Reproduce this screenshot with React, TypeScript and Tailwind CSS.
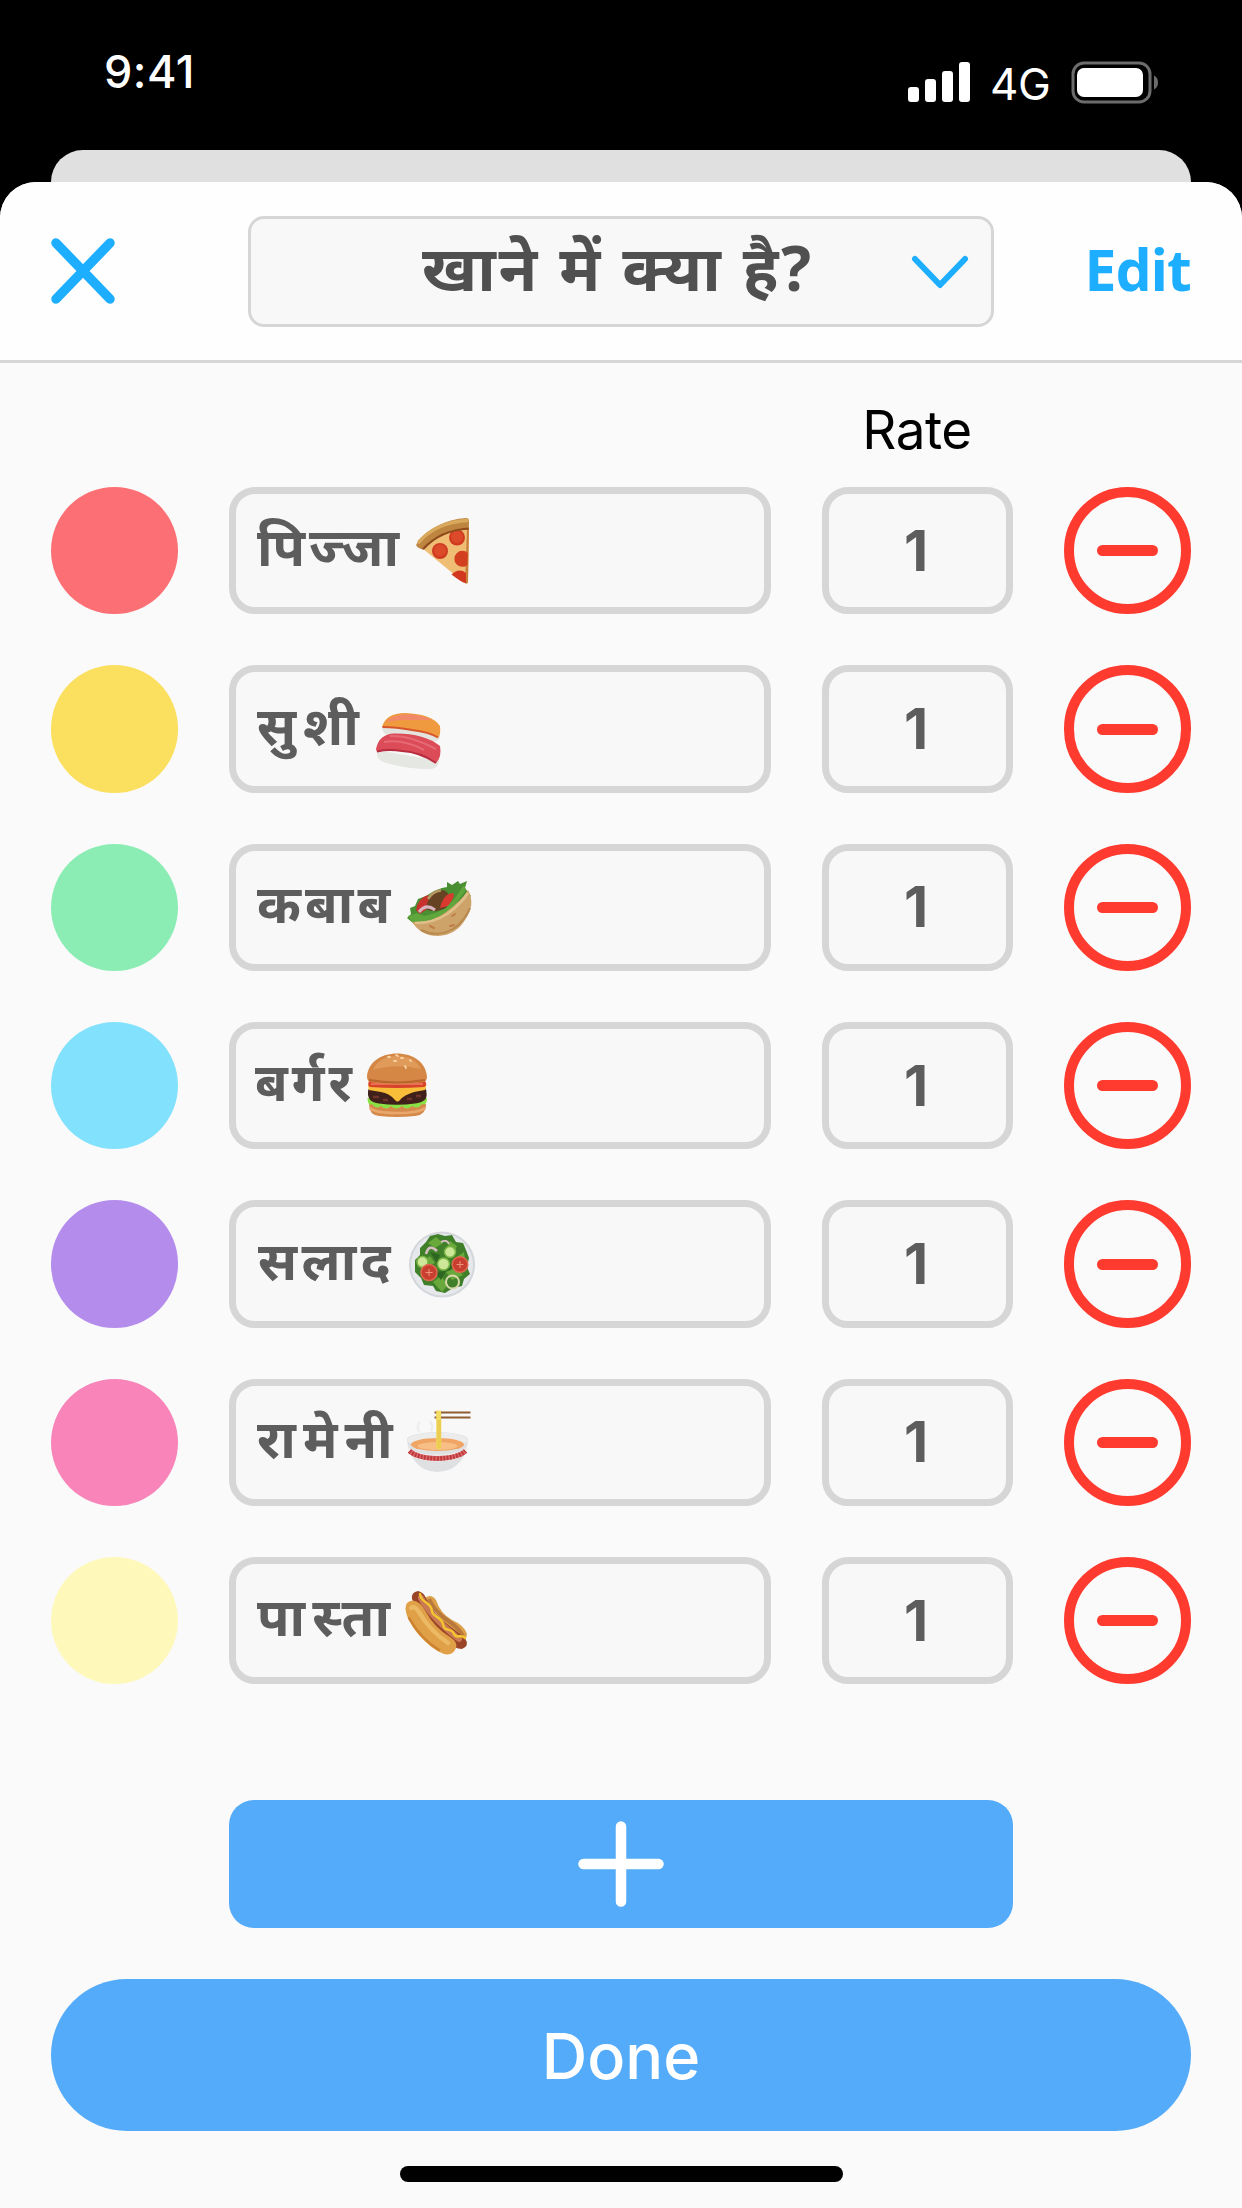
import type { ReactNode } from "react";

const PizzaIcon = () => (
  <>
    <path d="M8 37 C20 26 38 19 55 17 L54 71 Q53 74 50 71.5 Z" fill="#efbd74" />
    <path d="M53 18 L55 17 L54 71 Q53.500 73.500 51 72 Z" fill="#c9803c" />
    <circle cx="43" cy="26.500" r="8" fill="#cf3a20" />
    <circle cx="43" cy="26" r="6" fill="#dc4a2a" />
    <circle cx="26" cy="40" r="8" fill="#cf3a20" />
    <circle cx="26" cy="39.500" r="6" fill="#dc4a2a" />
    <path d="M53.800 42 A8 8 0 1 0 53.500 54 Z" fill="#d2401f" />
    <path d="M37.500 63.500 Q45 56.500 52 62 L52 72 Q49 72.500 37.500 63.500 Z" fill="#d2381f" />
    <path d="M2.500 33 C14 17 33 8 52 7 Q55 7 55 10 L54.800 18.500 C37 19 23 25 12 37 Q10 39.500 7 38 Q1 35.500 2.500 33 Z" fill="#bd8540" />
    <path d="M5 31 C17 17 34 10.500 53 9.500" stroke="#d8a95c" strokeWidth="3.500" fill="none" strokeLinecap="round" />
    <path d="M9 38 C22 24 37 18.500 54.800 17.500" stroke="#8f4a1c" strokeWidth="2" fill="none" />
  </>
);

const SushiIcon = () => (
  <>
    <path d="M8 38 Q8 47 22 48 Q45 53 60 52.500 Q67 52 66 44 Z" fill="#e3e4df" />
    <path d="M8 38 Q12 24 31 24 Q58 25 66 37 Q67 46 64 48.500 Q55 42 38 41 Q20 38 8 38 Z" fill="#f09a3f" />
    <path d="M12 33 Q18 26 30 25.500 Q46 25 58 31 Q40 31 26 31 Z" fill="#f08a68" />
    <path d="M8.500 38 Q22 38 38 41 Q55 43 64 48.500" stroke="#d8542a" strokeWidth="2" fill="none" />
    <path d="M3 61 Q1 72 14 74.500 Q35 80 56 80 Q64 80 65 72 Z" fill="#e4e7e2" />
    <path d="M2 60 Q5 45 20 44.500 Q50 44 66 57 Q68 68 62 74 Q46 63 28 62 Q13 60 3 63 Z" fill="#dc4c58" />
    <path d="M16 47 Q36 46 62 60 M10 53 Q30 50 50 61" stroke="#e66a74" strokeWidth="2" fill="none" />
    <path d="M3 62.500 Q14 60 28 62 Q46 63 62 74" stroke="#b82c40" strokeWidth="2" fill="none" />
  </>
);

const WrapIcon = () => (
  <>
    <path d="M3 51 L7 47 L6 41 L11 39 L14 32 L22 29 L30 24 L38 21 L43 20 L43 15 L48 18 L54 14 L56 17 L63 14 L61 21 L67 29 L40 54 L9 56 Z" fill="#4a8f32" />
    <path d="M12 43 Q14 31 24 28 L26 40 L16 47 Z" fill="#c8322c" />
    <path d="M22 42 Q24 25 39 23 Q49 26 42 41 Q32 47 22 42 Z" fill="#654323" />
    <path d="M24 32 Q29 24 37 23.500" stroke="#b79660" strokeWidth="2.500" fill="none" />
    <path d="M36 41 Q39 27 49 26 Q52 29 44 39 Z" fill="#d93a2f" />
    <path d="M15 45 Q22 36 31 43" stroke="#d7b4bf" strokeWidth="3" fill="none" />
    <path d="M4 49 L13 46 L20 49 L31 46 L42 41 L51 31 L60 18 L62 23 L46 45 L24 56 L8 55 Z" fill="#5fa63c" />
    <path d="M8 55 Q28 56 42 45 Q57 34 64 23 Q72 37 61 53 Q52 68 34 69 Q17 69 8 55 Z" fill="#cea36a" />
    <path d="M11 56 Q30 56 43 47 Q58 36 64 26" stroke="#e0c08a" strokeWidth="2.500" fill="none" />
    <path d="M17 63 Q33 71 49 62 Q60 55 66 41" stroke="#b98a50" strokeWidth="2" fill="none" />
    <path d="M26 59 l4 2 M46 59 l4 -1 M48 49 l3 -2" stroke="#bd7d49" strokeWidth="2" strokeLinecap="round" />
  </>
);

const BurgerIcon = () => (
  <>
    <path d="M4 58 H61 Q61 69 50 70 Q32 72 14 70 Q4 69 4 58 Z" fill="#d58a4c" />
    <path d="M5 62 Q10 67 32 67 Q54 67 60 62" stroke="#e9a76b" strokeWidth="2.500" fill="none" />
    <path d="M2.500 52 Q3 61 7 58 Q11 64 16 60 Q21 65 26 60 Q31 65 37 60 Q42 65 47 60 Q53 64 57 58 Q62 60 62 52 Z" fill="#8be045" />
    <path d="M3 46 Q3 40 10 41 H54 Q62 40 61.500 47 Q63 56 50 57.500 Q32 60 14 57.500 Q2 56 3 46 Z" fill="#40201a" />
    <path d="M8 51 h6 M18 54 h5 M42 53 h5 M51 50 h5" stroke="#6e3528" strokeWidth="2.500" />
    <path d="M3 39 Q32 43 61.500 39 L60 44 L49 46 Q39 49 35 54 Q32.500 57 30 54 Q24 47 16 46 L4 44 Z" fill="#f8bd39" />
    <path d="M4 35 H60 Q63 39 59 41 Q32 43 5 41 Q2 39 4 35 Z" fill="#d8432c" />
    <path d="M6 38 H58" stroke="#ef7c60" strokeWidth="1.500" />
    <path d="M2 31 C3 16 16 7.500 32 7.500 C48 7.500 61 16 62 31 Q62 36 56 36.500 Q32 40 8 36.500 Q2 36 2 31 Z" fill="#d58745" />
    <path d="M8 24 C12 14 22 10 32 10 C43 10 52 14 56 23 Q32 17 8 24 Z" fill="#e09a5a" />
    <path d="M4 34 Q32 39 60 34" stroke="#b9652d" strokeWidth="2" fill="none" />
    <path d="M23 11 l2 0 M31 9 l2 1 M36 12 l2 0 M40 20 l1 2 M45 14 l1 1 M29 15 l2 0" stroke="#f6d3a0" strokeWidth="1.800" strokeLinecap="round" />
  </>
);

const SaladIcon = () => (
  <>
    <circle cx="35" cy="40.500" r="33" fill="#d3d6db" />
    <circle cx="35" cy="40.500" r="31" fill="#e6e8ec" />
    <path d="M19 18 L23 12 L31 10 L38 12 L45 11 L49 18 L56 19 L59 26 L62 34 L60 43 L63 50 L57 55 L55 62 L46 64 L38 69 L29 67 L26 62 L17 61 L14 54 L8 48 L8 36 L13 31 L13 24 Z" fill="#41802a" />
    <path d="M21 19 l8 -6 7 6 -8 5 Z M43 17 l7 5 -3 7 -8 -4 Z M14 38 l9 -6 5 7 -10 4 Z M39 48 l10 -4 7 7 -11 5 Z M26 58 l8 -6 7 9 -6 7 Z M48 34 l9 -6 1 8 Z" fill="#69a83b" />
    <path d="M23 28 l10 3 -3 8 Z M40 38 l8 5 -8 4 Z M28 48 l6 8 5 -9 Z" fill="#2c6620" />
    <path d="M19 30 Q22 19 30 27" stroke="#d9bfc4" strokeWidth="2.500" fill="none" />
    <path d="M34 18 Q40 15 42 20" stroke="#d9bfc4" strokeWidth="2" fill="none" />
    <g stroke="#79b444" strokeWidth="1.500" fill="#cbe797">
      <circle cx="15.500" cy="38" r="5.500" />
      <circle cx="43" cy="28" r="5.500" />
      <circle cx="36.500" cy="40" r="6" />
    </g>
    <g fill="#c93f2f" stroke="#e16850" strokeWidth="1.500">
      <circle cx="22" cy="48.500" r="8" />
      <circle cx="53" cy="40.500" r="7.800" />
    </g>
    <path d="M22 45 v7 M18.500 48.500 h7 M53 37 v7 M49.500 40.500 h7" stroke="#ec947d" strokeWidth="1" />
    <circle cx="45.500" cy="58" r="6.500" fill="none" stroke="#d8d9ab" strokeWidth="2" />
  </>
);

const NoodlesIcon = () => (
  <>
    <path d="M14 30 Q11 24 15 20 M26 29 Q29 24 25 19" stroke="#ededed" strokeWidth="2.500" fill="none" />
    <path d="M2 37 Q5 31 32.500 30 Q60 31 63 37 Q62 58 46 67 Q32 73 19 67 Q4 58 2 37 Z" fill="#dfe0e1" />
    <ellipse cx="32.500" cy="38" rx="30" ry="7.500" fill="#ececec" />
    <ellipse cx="32.500" cy="42.500" rx="26.500" ry="6.500" fill="#f0a564" />
    <ellipse cx="32.500" cy="44" rx="20" ry="4" fill="#f7bf85" />
    <path d="M31.300 10 H36.300 V45 Q34 50 31.300 46 Z" fill="#f3d95b" />
    <path d="M33 11 V47 M35 11 V46" stroke="#dfb93f" strokeWidth="0.700" />
    <path d="M2.500 44 Q9 53 32 52.500 Q56 53 62 44 L61 51 Q54 59 32 59.500 Q10 59 4 51 Z" fill="#f0eeec" />
    <path d="M4.500 49 Q12 56 32 56.500 Q53 56 60.500 49" stroke="#d77070" strokeWidth="5" fill="none" />
    <path d="M4.500 49 Q12 56 32 56.500 Q53 56 60.500 49" stroke="#c23a3e" strokeWidth="4.500" strokeDasharray="2 1.200" fill="none" />
    <path d="M29.500 10.500 H65.500 M29.500 15.500 H65.500" stroke="#8e5d32" strokeWidth="2.200" />
    <path d="M31.300 8.500 H36 V18 H31.300 Z" fill="#f3dc62" />
  </>
);

const HotdogIcon = () => (
  <>
    <path d="M22 17 Q28 12 33 19 Q37 32 49 39 Q61 44 64 53 Q63 62 55 60 Z" fill="#dca04a" />
    <path d="M26 18 Q31 30 44 39 Q55 46 60 55" stroke="#b9793c" strokeWidth="4" fill="none" />
    <path d="M9 18 Q8 11 15 10 Q21 11 24 19 Q31 34 48 46 L62 57 Q67 65 59 68 Q51 68 45 61 L18 38 Z" fill="#9a4528" />
    <path d="M18 17 Q28 36 56 58" stroke="#c97953" strokeWidth="6" strokeLinecap="round" fill="none" />
    <path d="M2.500 28 Q2 20 10 19.500 Q17 20 23 31 Q31 46 47 56 Q55 61 53 67 Q50 75 41 73 Q29 69 15 53 Q3 38 2.500 28 Z" fill="#e0a047" />
    <path d="M8 27 Q11 24 16 31 Q26 49 45 62" stroke="#ebb864" strokeWidth="4.500" fill="none" strokeLinecap="round" />
    <path d="M6 37 Q18 58 36 69" stroke="#cd8230" strokeWidth="2.500" fill="none" strokeLinecap="round" />
    <path d="M17 13 C18 23 28 20 29 30 C29 36 38 35 40 43 C41 52 49 46 51 53 C53 58 59 53 62 57" stroke="#f3c52f" strokeWidth="2.500" fill="none" strokeLinecap="round" />
  </>
);

type Item = {
  name: string;
  nameClass: string;
  emoji: string;
  icon: ReactNode;
  color: string;
  rate: number;
};

const items: Item[] = [
  { name: "पिज्जा", nameClass: "w-[157px] tracking-[4px]", emoji: "🍕", icon: <PizzaIcon />, color: "#fc6f74", rate: 1 },
  { name: "सुशी", nameClass: "w-[117px] tracking-[7px]", emoji: "🍣", icon: <SushiIcon />, color: "#fbdf5e", rate: 1 },
  { name: "कबाब", nameClass: "w-[147px] tracking-[4px]", emoji: "🥙", icon: <WrapIcon />, color: "#8bedb4", rate: 1 },
  { name: "बर्गर", nameClass: "-ml-[2px] w-[110px] tracking-[4px]", emoji: "🍔", icon: <BurgerIcon />, color: "#82e2fd", rate: 1 },
  { name: "सलाद", nameClass: "ml-[1px] w-[149px] tracking-[4.500px]", emoji: "🥗", icon: <SaladIcon />, color: "#b38cec", rate: 1 },
  { name: "रामेनी", nameClass: "w-[148px] tracking-[7px]", emoji: "🍜", icon: <NoodlesIcon />, color: "#f884b9", rate: 1 },
  { name: "पास्ता", nameClass: "w-[146px] tracking-[7px]", emoji: "🌭", icon: <HotdogIcon />, color: "#fef9bb", rate: 1 },
];

function StatusBar() {
  return (
    <div className="flex h-[150px] items-start justify-between pl-[104px] pr-[83px] text-[44px] leading-[44px] text-white">
      <span className="mt-[50px] text-[45px] font-medium tracking-[0.5px]">9:41</span>
      <div className="mt-[60px] flex items-start">
        <svg width="62" height="42" viewBox="0 0 62 42" fill="white">
          <rect x="0" y="27" width="11" height="15" rx="3" />
          <rect x="17" y="19" width="11" height="23" rx="3" />
          <rect x="34" y="11" width="11" height="31" rx="3" />
          <rect x="51" y="2" width="11" height="40" rx="3" />
        </svg>
        <span className="ml-[20px] mt-[2px] w-[61px] tracking-[-0.500px]">4G</span>
        <svg className="ml-[20px]" width="88" height="44" viewBox="0 0 88 44" fill="none">
          <rect x="2" y="3" width="77" height="39" rx="11" stroke="#6c6c6c" strokeWidth="3" />
          <rect x="6" y="8" width="66" height="29" rx="7" fill="white" />
          <path d="M83 15.500 Q87 17.500 87 22.500 Q87 27.500 83 29.500 Z" fill="#6c6c6c" />
        </svg>
      </div>
    </div>
  );
}

function Header() {
  return (
    <header className="flex h-[181px] items-start border-b-3 border-[#d6d6d6] bg-[#fefefe] px-[51px] pt-[34px]">
      <button className="mt-[22px]" aria-label="Close">
        <svg width="64" height="66" viewBox="0 0 64 66" fill="none" stroke="#1eaeff" strokeWidth="9.500" strokeLinecap="round">
          <path d="M5 5 L59 61 M59 5 L5 61" />
        </svg>
      </button>
      <button className="ml-[133px] flex h-[111px] w-[746px] items-center rounded-[16px] border-3 border-[#d6d6d6] bg-[#f8f8f8] pl-[171px] pr-[22px]">
        <span className="mt-[-11px] w-[392px] whitespace-nowrap text-left font-['Noto_Sans','Noto_Sans_Devanagari',sans-serif] text-[63px] font-bold leading-none tracking-[2.800px] text-[#505050]">
          खाने में क्या है?
        </span>
        <svg className="ml-auto" width="58" height="34" viewBox="0 0 58 34" fill="none" stroke="#1eaeff" strokeWidth="6" strokeLinecap="round" strokeLinejoin="round">
          <path d="M4 4 L29 30 L54 4" />
        </svg>
      </button>
      <button className="ml-auto mt-[23px] font-['Noto_Sans',sans-serif] text-[57px] font-bold leading-[60px] tracking-[-0.800px] text-[#1eaeff]">
        Edit
      </button>
    </header>
  );
}

function ItemRow({ item }: { item: Item }) {
  return (
    <div className="flex h-[127.350px] gap-[51px]">
      <div className="h-full w-[127px] shrink-0 rounded-full" style={{ backgroundColor: item.color }} />
      <div className="flex w-[542px] items-center rounded-[26px] border-7 border-[#d6d6d6] bg-[#f8f8f8] pl-[21px]">
        <span
          className={`mt-[-10px] shrink-0 whitespace-nowrap font-['Noto_Sans','Noto_Sans_Devanagari',sans-serif] text-[53px] font-bold leading-none text-[#5d5d5d] ${item.nameClass}`}
        >
          {item.name}
        </span>
        <svg className="overflow-visible" width="72" height="80" viewBox="0 0 72 80" role="img" aria-label={item.emoji}>
          {item.icon}
        </svg>
      </div>
      <div className="flex w-[191px] items-center justify-center rounded-[26px] border-7 border-[#d6d6d6] bg-[#f8f8f8] pr-[3px] text-[56px] font-bold leading-none text-[#5d5d5d]">
        {item.rate}
      </div>
      <button
        aria-label="Remove"
        className="flex w-[127px] items-center justify-center rounded-full border-[10.500px] border-[#ff3b30]"
      >
        <span className="h-[11px] w-[61px] rounded-full bg-[#ff3b30]" />
      </button>
    </div>
  );
}

export default function App() {
  return (
    <div className="flex h-[2208px] w-[1242px] flex-col overflow-hidden bg-black font-['Inter',sans-serif]">
      <StatusBar />
      {/* Edge of the sheet underneath */}
      <div className="mx-[51px] h-[80px] shrink-0 rounded-t-[32px] bg-[#e0e0e0]" />

      <div className="relative z-10 mt-[-48px] flex flex-1 flex-col overflow-hidden rounded-t-[36px] bg-[#fafafa]">
        <Header />

        <main className="flex flex-1 flex-col px-[51px]">
          <div className="flex h-[124px] justify-end pr-[179px] pt-[42px]">
            <span className="w-[190px] text-center text-[53px] leading-[50px] tracking-[-0.500px] text-black">Rate</span>
          </div>

          <div className="flex flex-col gap-[51px]">
            {items.map((item) => (
              <ItemRow key={item.name} item={item} />
            ))}
          </div>

          <button aria-label="Add" className="mx-[178px] mt-[115.500px] flex h-[128px] items-center justify-center rounded-[25px] bg-[#53abf9]">
            <svg width="86" height="86" viewBox="0 0 86 86" stroke="white" strokeWidth="10.500" strokeLinecap="round">
              <path d="M43 5.500 V80.500 M5.500 43 H80.500" />
            </svg>
          </button>
          <button className="mt-[51px] flex h-[152px] items-center justify-center rounded-full bg-[#53abf9] pt-[3px] text-[63px] font-medium leading-none text-white">
            Done
          </button>
          <div className="mx-auto mt-[35px] h-[16px] w-[443px] rounded-full bg-black" />
        </main>
      </div>
    </div>
  );
}
